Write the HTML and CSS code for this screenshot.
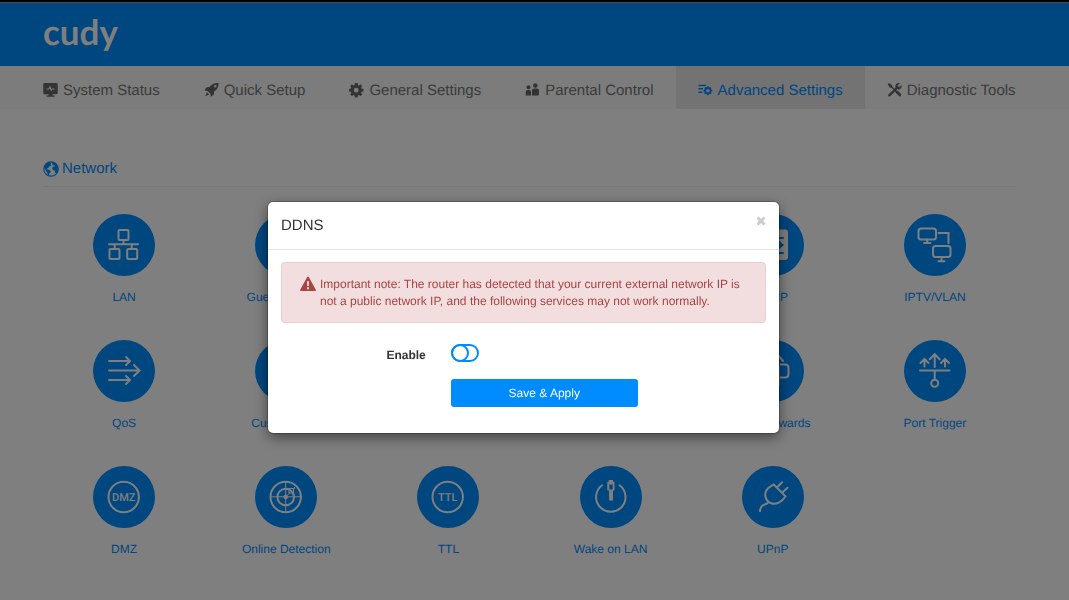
FILE: index.html
```html
<!DOCTYPE html>
<html lang="en">
<head>
<meta charset="utf-8">
<title>Advanced Settings</title>
<meta name="viewport" content="width=device-width, initial-scale=1">
<link rel="stylesheet" href="styles.css">
</head>
<body>
<div class="top-edge"></div>
<header class="header"><a class="logo" href="#">cudy</a></header>
<nav class="nav">
  <a class="nav-item" href="#">
    <svg class="nav-icon" viewBox="0 0 16 16" fill="currentColor"><path fill-rule="evenodd" d="M1.500 1h12A1.200 1.200 0 0 1 14.700 2.200v9A1.200 1.200 0 0 1 13.500 12.300H9.500v1.200h2v1.300H3.500V13.500h2v-1.200H1.500A1.200 1.200 0 0 1 .3 11.200v-9A1.200 1.200 0 0 1 1.500 1zM3.500 6.400v1h2.200l1.100-1.200 1.200 3 1.400-1.800H11.500v-1H9l-.6.800-1.200-3.400-1.900 2.600z"/></svg>System Status</a>
  <a class="nav-item" href="#">
    <svg class="nav-icon" viewBox="0 0 16 16" fill="currentColor"><path fill-rule="evenodd" d="M14.500 1c.2 4.300-1.200 6.500-4.400 8.600l-.2 3-3 2.200-.5-3.100-2.800-2.800L.4 8.400l2.200-3.100 3-.2C7.700 2 10.300.8 14.500 1zM11.300 3A1.200 1.200 0 1 0 11.300 5.400 1.200 1.200 0 0 0 11.300 3zM3 10.300l2.200 2.200L1.200 14.300z"/></svg>Quick Setup</a>
  <a class="nav-item" href="#">
    <svg class="nav-icon" viewBox="0 0 16 16" fill="currentColor"><path fill-rule="evenodd" d="M5.900 1h2.600l.4 2 1 .4 1.600-1.100 1.700 1.700-1.100 1.600.4 1 2 .4v2.400l-2 .4-.4 1 1.100 1.600-1.700 1.700-1.600-1.100-1 .4-.4 2H5.900l-.4-2-1-.4-1.600 1.100-1.700-1.700 1.100-1.600-.4-1-1.800-.4V7l1.800-.4.400-1L1.200 4l1.700-1.700 1.600 1.100 1-.4zM7.200 5.800a2.400 2.400 0 1 0 0 4.800 2.400 2.400 0 0 0 0-4.800z"/></svg>General Settings</a>
  <a class="nav-item" href="#">
    <svg class="nav-icon" viewBox="0 0 16 16" fill="currentColor"><circle cx="3.500" cy="5.300" r="2"/><circle cx="10.300" cy="3.500" r="2.300"/><path d="M.7 13.500V10Q.7 8 2.700 8h1.700Q6 8 6 9.500v4zM7 13.500V8.500Q7 6.500 9 6.500h3Q14 6.500 14 8.500v3.500Q14 13.500 12.500 13.500z"/></svg>Parental Control</a>
  <a class="nav-item active" href="#">
    <svg class="nav-icon" viewBox="0 0 16 16" fill="none" stroke="currentColor"><path stroke-width="1.400" d="M.5 3.500h7.500M.5 6.800h4.500M.5 10.200h4"/><circle cx="9.900" cy="8.700" r="2.700" stroke-width="1.800"/><path stroke-width="1.600" d="M9.900 4.300v2M9.900 11v2.200M5.500 8.700h2M12.300 8.700h2M6.800 5.600l1.400 1.400M11.600 10.400l1.400 1.400M6.800 11.800l1.400-1.400M11.600 7L13 5.600"/></svg>Advanced Settings</a>
  <a class="nav-item" href="#">
    <svg class="nav-icon" viewBox="0 0 16 16"><path fill="none" stroke="currentColor" stroke-width="2.400" stroke-linecap="round" d="M2.300 13.300L10.500 5.300"/><path fill="none" stroke="currentColor" stroke-width="1.400" d="M3 3.200L9.500 9.700"/><path fill="none" stroke="currentColor" stroke-width="3" stroke-linecap="round" d="M10 10L12.800 12.800"/><path fill="currentColor" d="M.7 2.200L2 1 5 3.200l.2 1.500-1 1-1.500-.2zM12.800 1.200l-2.200 2.200.3 1.400 1.400.3 2.200-2.200c.6 2.400-1 4.800-3.500 4.500L8.300 4.900c-.4-2.700 2.100-4.700 4.500-3.700z"/></svg>Diagnostic Tools</a>
</nav>
<main class="content">
  <h2 class="section-title">
    <svg class="nav-icon" viewBox="0 0 16 16"><circle cx="8" cy="8" r="7.200" fill="none" stroke="currentColor" stroke-width="1.200"/><path fill="currentColor" d="M1.200 6C2 3.500 4 1.500 6.600 1l1.600 1-.7 1.200 1 .8-1.200 1.300-1.500.3-.3 1.400-1.500.3.300 1.200 2 .2 1.500 1.500-.7 1.700-1 .8-.2 2.200-1-.3-.8-3.200L2.600 9zM9.500 1.200c2.500.6 4.600 2.500 5.300 5l.2 3-1.300 2.800-1.400.3-.6-2.700-1.900-.6-.6-2 1.300-1.600 1.600-.2-.4-1-1.600.2-.8-1.200z"/></svg>Network</h2>
  <ul class="grid">
    <li><a class="tile" href="#"><svg class="tile-icon" viewBox="0 0 62 62"><rect x="25.500" y="16" width="10" height="10" rx="1"/><path d="M30.500 26v4.300M16 30.300h29M21.700 30.300v4.700M38.700 30.300v4.700"/><rect x="16.500" y="35" width="10" height="10" rx="1"/><rect x="34.200" y="35" width="10" height="10" rx="1"/></svg>LAN</a></li>
    <li><a class="tile" href="#"><svg class="tile-icon" viewBox="0 0 62 62"></svg>Guest Network</a></li>
    <li class="col-5"><a class="tile" href="#"><svg class="tile-icon" viewBox="0 0 62 62"><rect class="solid" x="16" y="15.500" width="30" height="30.500" rx="3"/><path class="cut" d="M21 24h20M21 31h18M36.500 27.500L40.500 31 36.500 34.500M21 39h20"/></svg>IGMP</a></li>
    <li><a class="tile" href="#"><svg class="tile-icon" viewBox="0 0 62 62"><rect x="14.500" y="14.500" width="17.500" height="11" rx="2.500"/><path d="M23.200 25.500v3.500M20 29h6.500M34.500 19h10v10M37.500 43v4M34.500 47.200h6"/><rect x="29" y="32" width="17.500" height="11" rx="2.500"/></svg>IPTV/VLAN</a></li>
    <li><a class="tile" href="#"><svg class="tile-icon" viewBox="0 0 62 62"><path d="M16 21H37M33 17l4 4-4 4M16 30.500H46M41 25l5.500 5.500L41 36M16 40H37M33 36l4 4-4 4"/></svg>QoS</a></li>
    <li><a class="tile" href="#"><svg class="tile-icon" viewBox="0 0 62 62"></svg>Custom DNS</a></li>
    <li class="col-5"><a class="tile" href="#"><svg class="tile-icon" viewBox="0 0 62 62"><path d="M30.500 21L36 15l5 6M36.500 27v18.500M38.500 24.500H43q3.500 0 3.500 3.500v6q0 3.500-3.500 3.500h-4.500"/></svg>Port Forwards</a></li>
    <li><a class="tile" href="#"><svg class="tile-icon" viewBox="0 0 62 62"><path d="M16 30.500h29.500M30.700 27V14.500M25.700 19.200l5-5 5 5M20.500 26.500v-7M16.500 23l4-4 4 4M41 26.500v-7M37 23l4-4 4 4M30.700 30.500V39.500"/><circle cx="30.700" cy="43.300" r="3.500"/></svg>Port Trigger</a></li>
    <li><a class="tile" href="#"><svg class="tile-icon" viewBox="0 0 62 62"><circle cx="30.700" cy="31" r="15.200"/><text x="30.700" y="35" text-anchor="middle">DMZ</text></svg>DMZ</a></li>
    <li><a class="tile" href="#"><svg class="tile-icon" viewBox="0 0 62 62"><circle cx="30.700" cy="31" r="15.200"/><circle cx="30.700" cy="31" r="8.300"/><path class="thin" d="M30.700 15.500v31M15.500 30.800h31M31 30.500l4-4"/><circle class="solid" cx="30.700" cy="31" r="2.300"/><rect class="thin" x="34" y="22.500" width="4.500" height="4.500"/><path class="thin" d="M33 22.500h-2M38.500 27v2M39.500 22.500v-1"/></svg>Online Detection</a></li>
    <li><a class="tile" href="#"><svg class="tile-icon" viewBox="0 0 62 62"><circle cx="30.700" cy="31" r="15.200"/><text x="30.700" y="35" text-anchor="middle">TTL</text></svg>TTL</a></li>
    <li><a class="tile" href="#"><svg class="tile-icon" viewBox="0 0 62 62"><path d="M22 19.300a14.700 14.700 0 1 0 17.600 0"/><path class="solid" fill-rule="evenodd" d="M28.700 14h4.300v1.700h1.500V24.500H33v10h-4v-10h-1.700v-8.800h1.400zM29.300 18.500v5h3.400v-5z"/></svg>Wake on LAN</a></li>
    <li><a class="tile" href="#"><svg class="tile-icon" viewBox="0 0 62 62"><path d="M31.700 18.500L43.500 30.300C40 36 34 39.500 28.500 37 22.500 34 22 27 25 23.500 27 21 29.500 20 31.700 18.500zM35 21.500l5-5.300M40.300 26.500l5.200-4.800M25.500 37C23 39.500 22.500 37.500 20 40q-2 2-2 5.300"/></svg>UPnP</a></li>
  </ul>
</main>
<div class="backdrop">
  <section class="modal" role="dialog" aria-labelledby="dialog-title">
    <div class="modal-header">
      <h1 class="modal-title" id="dialog-title">DDNS</h1>
      <button class="close" type="button" aria-label="Close"><svg viewBox="0 0 10 10"><path d="M1.500 1.500l7 7M8.500 1.500l-7 7"/></svg></button>
    </div>
    <div class="modal-body">
      <div class="alert">
        <svg class="alert-icon" viewBox="0 0 16 16"><path fill="currentColor" fill-rule="evenodd" d="M7.200 1q.8-1.200 1.600 0l7 12.800q.5 1.200-.8 1.200H1q-1.300 0-.8-1.200zM6.900 5.300l.3 4.600h1.600l.3-4.600zM7 11.200v2h2v-2z"/></svg>
        <p class="alert-text">Important note: The router has detected that your current external network IP is not a public network IP, and the following services may not work normally.</p>
      </div>
      <form class="form">
        <label class="form-label" for="enable">Enable</label>
        <input class="toggle" type="checkbox" id="enable">
        <button class="submit" type="button">Save &amp; Apply</button>
      </form>
    </div>
  </section>
</div>
</body>
</html>
```

FILE: styles.css
```css
*, *::before { box-sizing: border-box; }

body {
  margin: 0;
  min-height: 100vh;
  background: #fff;
  font-family: "Liberation Sans", Arial, sans-serif;
  font-size: 12px;
  color: #333;
  text-rendering: geometricPrecision;
}

a { color: inherit; text-decoration: none; }

.top-edge {
  height: 3px;
  background: #000;
  border-bottom: 1px solid #999;
}

.header {
  display: flex;
  align-items: center;
  height: 63px;
  padding: 0 43px 6px;
  background: #008cff;
}

.logo {
  font-family: Lato, sans-serif;
  font-weight: 700;
  font-size: 35px;
  line-height: 40px;
  color: #fff;
}

.nav {
  display: flex;
  height: 43px;
  padding-left: 21px;
  background: #f8f8f8;
}

.nav-item {
  display: flex;
  align-items: center;
  gap: 4px;
  padding: 5px 22px 0;
  font-size: 15px;
  white-space: nowrap;
  color: #777;
}

.nav-item.active { background: #e7e7e7; color: #008cff; }

.nav-icon { flex: none; width: 16px; height: 16px; }

.nav-item:not(.active) .nav-icon { color: #666; }

.content { padding: 48px 53px 40px 43px; }

.section-title {
  display: flex;
  align-items: center;
  gap: 3px;
  margin: 0 0 27px;
  padding-bottom: 5px;
  border-bottom: 1px solid #eee;
  font-size: 15px;
  font-weight: 400;
  line-height: 24px;
  color: #008cff;
}

.grid {
  display: grid;
  grid-template-columns: repeat(6, 1fr);
  row-gap: 34px;
  margin: 0;
  padding: 0;
  list-style: none;
}

.col-5 { grid-column: 5; }

.tile {
  display: flex;
  flex-direction: column;
  align-items: center;
  gap: 12px;
  line-height: 18px;
  color: #008cff;
}

.tile-icon {
  width: 62px;
  height: 62px;
  border-radius: 50%;
  background: #008cff;
  fill: none;
  stroke: #fff;
  stroke-width: 2;
  stroke-linecap: round;
}

.tile-icon .solid { fill: #fff; stroke: none; }
.tile-icon .cut { stroke: #008cff; }
.tile-icon .thin { stroke-width: 1; }
.tile-icon text {
  fill: #fff;
  stroke: none;
  font: 500 11px Roboto, sans-serif;
}

.backdrop {
  position: fixed;
  inset: 0;
  padding: 202px 22px 0 0;
  background: rgba(0, 0, 0, .5);
}

.modal {
  width: 48%;
  min-width: 511px;
  max-width: 600px;
  margin: 0 auto;
  background: #fff;
  border-radius: 5px;
  box-shadow: 0 0 0 1px rgba(0, 0, 0, .2), 0 4px 14px rgba(0, 0, 0, .5);
}

.modal-header {
  display: flex;
  justify-content: space-between;
  align-items: flex-start;
  padding: 13px;
  border-bottom: 1px solid #e5e5e5;
}

.modal-title {
  margin: 0;
  font-size: 15px;
  font-weight: 400;
  line-height: 21px;
}

.close {
  width: 10px;
  height: 12px;
  padding: 0;
  border: 0;
  background: none;
}

.close svg { display: block; width: 10px; height: 10px; fill: none; stroke: #ccc; stroke-width: 3; }

.modal-body { padding: 12px 13px 26px; }

.alert {
  display: flex;
  gap: 4px;
  padding: 13px 18px 12px;
  background: #f2dede;
  border: 1px solid #ebccd1;
  border-radius: 4px;
  color: #a94442;
}

.alert-icon { flex: none; width: 16px; height: 16px; }

.alert-text { margin: 0; line-height: 17px; }

.form {
  display: grid;
  grid-template-columns: 35% 1fr;
  row-gap: 15px;
  margin-top: 21px;
}

.form-label {
  padding: 2px 25px 0 0;
  font-weight: 700;
  line-height: 18px;
  text-align: right;
}

.toggle {
  appearance: none;
  width: 28px;
  height: 18px;
  margin: 0;
  border: 2px solid #008cff;
  border-radius: 9px;
  background: #fff;
}

.toggle::before {
  content: "";
  display: block;
  width: 18px;
  height: 18px;
  margin: -2px;
  border: 2px solid #008cff;
  border-radius: 50%;
}

.submit {
  grid-column: 2;
  width: 187px;
  height: 28px;
  border: 0;
  border-radius: 3px;
  background: #008cff;
  font: 12px "Liberation Sans", Arial, sans-serif;
  color: #fff;
  text-rendering: inherit;
}
```
